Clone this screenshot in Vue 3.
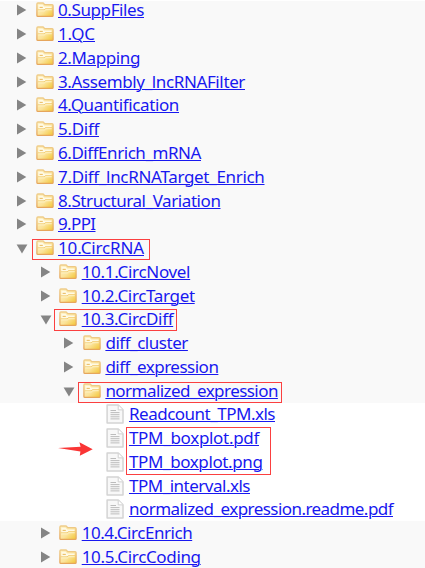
<script setup>
import { ref, onMounted } from 'vue'

const rows = [
  { depth: 0, label: '0.SuppFiles', width: 86 },
  { depth: 0, label: '1.QC', width: 37 },
  { depth: 0, label: '2.Mapping', width: 82 },
  { depth: 0, label: '3.Assembly_lncRNAFilter', width: 187 },
  { depth: 0, label: '4.Quantification', width: 121 },
  { depth: 0, label: '5.Diff', width: 41 },
  { depth: 0, label: '6.DiffEnrich_mRNA', width: 143 },
  { depth: 0, label: '7.Diff_lncRNATarget_Enrich', width: 206.5 },
  { depth: 0, label: '8.Structural_Variation', width: 162.5 },
  { depth: 0, label: '9.PPI', width: 37.5 },
  { depth: 0, label: '10.CircRNA', width: 86, open: true },
  { depth: 1, label: '10.1.CircNovel', width: 108.5 },
  { depth: 1, label: '10.2.CircTarget', width: 113 },
  { depth: 1, label: '10.3.CircDiff', width: 91.5, open: true },
  { depth: 2, label: 'diff_cluster', width: 82.5 },
  { depth: 2, label: 'diff_expression', width: 113 },
  { depth: 2, label: 'normalized_expression', width: 172.5, open: true },
  { depth: 3, label: 'Readcount_TPM.xls', width: 146, file: true },
  { depth: 3, label: 'TPM_boxplot.pdf', width: 130, file: true },
  { depth: 3, label: 'TPM_boxplot.png', width: 133.5, file: true },
  { depth: 3, label: 'TPM_interval.xls', width: 121, file: true },
  { depth: 3, label: 'normalized_expression.readme.pdf', width: 264, file: true },
  { depth: 1, label: '10.4.CircEnrich', width: 110.5 },
  { depth: 1, label: '10.5.CircCoding', width: 119 },
]

const links = ref([])
const spacing = ref(rows.map(() => 0))

onMounted(() => {
  spacing.value = rows.map((row, i) => {
    const natural = links.value[i].getBoundingClientRect().width
    return (row.width - natural) / row.label.length
  })
})
</script>

<template>
  <main class="page">
    <svg class="defs" width="0" height="0" aria-hidden="true">
      <defs>
        <linearGradient id="folderFill" x1="0" y1="0" x2="1" y2="1">
          <stop offset="0" stop-color="#fff3c4" />
          <stop offset="0.55" stop-color="#fbe39a" />
          <stop offset="1" stop-color="#f2c530" />
        </linearGradient>
        <linearGradient id="folderEdge" x1="0" y1="0" x2="0" y2="1">
          <stop offset="0" stop-color="#efcd8a" />
          <stop offset="1" stop-color="#e6a65c" />
        </linearGradient>
      </defs>
    </svg>
    <ul class="tree">
      <li
        v-for="(row, i) in rows"
        :key="row.label"
        class="row"
        :class="['depth-' + row.depth, { file: row.file }]"
      >
        <svg class="toggle" viewBox="0 0 12 14" width="12" height="14">
          <path v-if="row.open" d="M.6 3.6h10.8L6 12.4z" fill="#858585" />
          <path v-else-if="!row.file" d="M1 1.4 10.3 7 1 12.6z" fill="#858585" />
        </svg>
        <svg v-if="row.file" class="icon" viewBox="0 0 18 20" width="18" height="20">
          <path d="M1.1 1h11.2L17 5.7V19H1.1z" fill="#f8f8f8" stroke="#d4d4d4" stroke-width="1.5" stroke-linejoin="round" />
          <path d="M12.2 1.2v4.7H17" fill="#fff" stroke="#d0d0d0" />
          <path d="M4.5 6.5h5.5M4.5 8.6h9M4.5 10.7h9M4.5 12.8h9M4.5 14.9h9" stroke="#bcbcbc" stroke-width="1" />
        </svg>
        <svg v-else class="icon" viewBox="0 0 18 20" width="18" height="20">
          <path d="M.9 15.4V4q0-1 1-1h5.2l1.7 1.7h7.3q1 0 1 1v9.7q0 1-1 1H1.9q-1 0-1-1z" fill="url(#folderFill)" stroke="url(#folderEdge)" stroke-width="1.3" />
          <path d="M2.4 9.4V4.7h4.2l1.6 1.7h7.4v2H9.4L8.1 9.4z" fill="#fffae6" />
          <path d="M3.6 7.4h3.2" stroke="#eabf68" stroke-width="1.1" />
          <path d="M1.9 9.9h6.2l1.4-1.2h6.6" fill="none" stroke="#efc565" stroke-width=".8" />
          <path d="M2.2 10.9h6.2l1.4-1.2h5.9" fill="none" stroke="#fff5cd" stroke-width=".9" />
        </svg>
        <a
          :ref="el => (links[i] = el)"
          class="label"
          :style="{ letterSpacing: spacing[i] + 'px' }"
        >{{ row.label }}</a>
      </li>
    </ul>
    <div class="mark mark-circrna"></div>
    <div class="mark mark-diff"></div>
    <div class="mark mark-normalized"></div>
    <div class="mark mark-boxplot"></div>
    <svg class="pointer" viewBox="0 0 35 14" width="35" height="14">
      <path d="M0 5.9 22.6 4.7 21.4.2 34.7 7.2 21.8 13.8l.6-4.3z" fill="#fa3535" />
    </svg>
  </main>
</template>

<style>
body {
  background: #fff;
  overflow: hidden;
}
</style>

<style scoped>
.page {
  position: relative;
  width: 425px;
  height: 568px;
  overflow: hidden;
  border-top: 1px solid #fff;
  box-sizing: border-box;
}
.defs {
  position: absolute;
}
.tree {
  list-style: none;
  margin: -2.5px 0 0;
  padding: 0;
}
.row {
  display: flex;
  align-items: center;
  box-sizing: border-box;
  height: 23.77px;
  padding-left: 16px;
  background: #f9f9f9;
}
.row.file {
  background: #fff;
}
.depth-1 {
  padding-left: 39.7px;
}
.depth-2 {
  padding-left: 63.4px;
}
.depth-3 {
  padding-left: 86.6px;
}
.toggle {
  flex: none;
}
.icon {
  flex: none;
  margin: 0 4.5px 0 7.5px;
}
.file .icon {
  margin: 0 5.4px 0 7px;
}
.label {
  font: 400 17px/18px "Noto Sans", "Open Sans", sans-serif;
  color: #1818f0;
  white-space: nowrap;
  text-decoration: underline;
  text-decoration-thickness: 1px;
  text-underline-offset: 1px;
}
.mark {
  position: absolute;
  box-sizing: border-box;
  border: 1px solid #fb4040;
}
.mark-circrna {
  left: 32px;
  top: 238px;
  width: 118px;
  height: 21px;
}
.mark-diff {
  left: 54px;
  top: 308px;
  width: 123px;
  height: 22px;
}
.mark-normalized {
  left: 78px;
  top: 381px;
  width: 204px;
  height: 21px;
}
.mark-boxplot {
  left: 126px;
  top: 426px;
  width: 145px;
  height: 48px;
}
.pointer {
  position: absolute;
  left: 58px;
  top: 441px;
}
</style>
